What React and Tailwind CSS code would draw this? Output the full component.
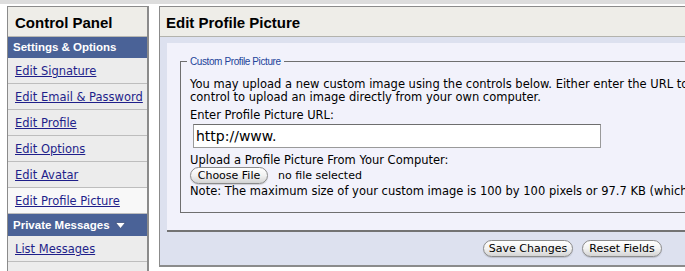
const sideLinks = ['Edit Signature', 'Edit Email & Password', 'Edit Profile', 'Edit Options', 'Edit Avatar'];

const AquaButton = ({ children, className = '' }) => (
  <button
    className={
      'h-[17px] rounded-full border border-[#8c8c8c] bg-linear-to-b from-white via-[#f2f2f2] to-[#d4d4d4] text-[11px] leading-[15px] text-black shadow-[0_1px_1px_rgba(0,0,0,0.15)] ' +
      className
    }
  >
    {children}
  </button>
);

const SideRow = ({ label, active }) => (
  <div
    className={
      'h-[26px] border-b border-[#bdbdbd] pl-[7px] pt-[3px] flex items-center ' +
      (active ? 'bg-[#f8f8f8]' : 'bg-[#ececec]')
    }
  >
    <a href="#" className="text-[11.5px] text-[#1f1f8a] underline underline-offset-[1px]">
      {label}
    </a>
  </div>
);

export default function App() {
  return (
    <div className="w-[685px] h-[271px] overflow-hidden bg-white font-['DejaVu_Sans',Verdana,sans-serif]">
      <div className="h-[4px] bg-[#dddddd]" />
      <div className="flex items-start pt-[2px] pl-[7px] gap-[10px]">
        {/* sidebar */}
        <aside className="w-[142px] shrink-0 h-[300px] border-t border-l border-r-2 border-[#8b8b8b] bg-[#ececec]">
          <div className="h-[30px] bg-[#eeede8] border-b border-[#b8b8b2] pl-[7px] pt-[3px] flex items-center">
            <span className="font-['Liberation_Sans',Arial,sans-serif] font-bold text-[15px] text-black">
              Control Panel
            </span>
          </div>
          <div className="h-[21px] bg-[#4a6297] pl-[5px] pt-[1px] flex items-center">
            <span className="font-['Liberation_Sans',Arial,sans-serif] font-bold text-[11.5px] text-white">
              Settings &amp; Options
            </span>
          </div>
          {sideLinks.map((l) => (
            <SideRow key={l} label={l} />
          ))}
          <SideRow label="Edit Profile Picture" active />
          <div className="h-[22px] bg-[#4a6297] pl-[5px] pt-[1px] flex items-center gap-[5px]">
            <span className="font-['Liberation_Sans',Arial,sans-serif] font-bold text-[11.5px] text-white">
              Private Messages
            </span>
            <svg width="11" height="7" viewBox="0 0 11 7">
              <path d="M0.5 0.5 L10.5 0.5 L5.5 6.5 Z" fill="white" stroke="#3a4f7c" strokeWidth="0.8" />
            </svg>
          </div>
          <SideRow label="List Messages" />
          <SideRow label="" />
        </aside>

        {/* main panel */}
        <main className="w-[828px] shrink-0 border-t border-l border-r-2 border-b-2 border-[#8b8b8b] bg-[#dde1ef]">
          <div className="h-[30px] bg-[#eeede8] border-b border-[#b3b3ad] pl-[6px] pt-[4px] flex items-center">
            <h1 className="font-['Liberation_Sans',Arial,sans-serif] font-bold text-[15px] text-black">
              Edit Profile Picture
            </h1>
          </div>
          <div className="px-[7px] pt-[6px]">
            <div className="bg-[#f2f2fb] border-b-2 border-[#737373] px-[13px] pt-[12px] pb-[17px]">
              <fieldset className="border border-[#6f6f6f] pl-[9px] pr-[9px] pb-[14px]">
                <legend className="-ml-[3px] px-[3px] font-['Liberation_Sans',Arial,sans-serif] text-[10px] tracking-[-0.4px] leading-[13px] text-[#23449a]">
                  Custom Profile Picture
                </legend>
                <p className="mt-[10px] text-[11.5px] leading-[13px] text-black whitespace-nowrap">
                  You may upload a new custom image using the controls below. Either enter the URL to
                  <br />
                  control to upload an image directly from your own computer.
                </p>
                <div className="mt-[5px] text-[11.5px] leading-[13px] text-black">Enter Profile Picture URL:</div>
                <input
                  type="text"
                  defaultValue="http://www."
                  className="mt-[2px] ml-[3px] block w-[408px] h-[24px] bg-white border border-[#9a9a9a] border-t-[#6e6e6e] px-[2px] text-[14px] text-black outline-none"
                />
                <div className="mt-[6px] text-[11.5px] leading-[13px] text-black whitespace-nowrap">
                  Upload a Profile Picture From Your Computer:
                </div>
                <div className="flex items-center gap-[10px] h-[17px]">
                  <AquaButton className="w-[78px]">Choose File</AquaButton>
                  <span className="text-[11px] leading-[13px] text-black">no file selected</span>
                </div>
                <div className="mt-[1px] text-[11.5px] leading-[13px] text-black whitespace-nowrap">
                  Note: The maximum size of your custom image is 100 by 100 pixels or 97.7 KB (which
                </div>
              </fieldset>
            </div>
          </div>
          <div className="flex justify-center gap-[9px] pt-[8px] pb-[8px]">
            <AquaButton className="w-[90px]">Save Changes</AquaButton>
            <AquaButton className="w-[80px]">Reset Fields</AquaButton>
          </div>
        </main>
      </div>
    </div>
  );
}
